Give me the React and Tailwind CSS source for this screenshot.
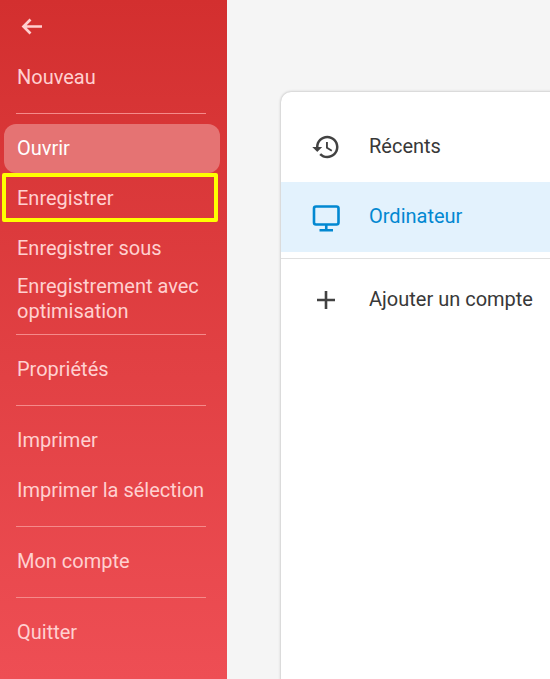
const font = { fontFamily: "Roboto, sans-serif" };

function Divider() {
  return <div className="ml-4 mr-[21px] mt-[11px] mb-[9px] h-px bg-[#f58a8a]" />;
}

function Item({ children, active, outlined, tall }) {
  return (
    <div
      className={`relative flex h-[50px] items-center pl-[17px] pr-2 text-[20px] leading-[25px] ${tall ? "pt-[2px]" : ""} ${
        active ? "text-white" : "text-[#ffd0d0]"
      }`}
    >
      {active && <div className="absolute left-1 right-[7px] top-px bottom-0 rounded-[12px] bg-[#e57373]" />}
      {outlined && (
        <div className="absolute left-[2px] right-[9px] top-0 bottom-px border-[4px] border-[#ffff00] rounded-[2px]" />
      )}
      <span className="relative">{children}</span>
    </div>
  );
}

function Row({ icon, label, selected, className, labelClass }) {
  return (
    <div
      className={`flex h-[70px] items-center pl-[29px] text-[20px] whitespace-nowrap ${
        selected ? "bg-[#e3f2fd] text-[#0288d1]" : "text-[#383838]"
      } ${className || ""}`}
    >
      {icon}
      <span className={`ml-[27px] ${labelClass || ""}`}>{label}</span>
    </div>
  );
}

const History = (
  <svg viewBox="0 0 24 24" fill="currentColor" className="h-[32px] w-[32px] shrink-0 translate-y-px p-px text-[#424242]">
    <path d="M13 3c-4.97 0-9 4.03-9 9H1l3.89 3.89.07.14L9 12H6c0-3.87 3.13-7 7-7s7 3.13 7 7-3.13 7-7 7c-1.93 0-3.68-.79-4.94-2.06l-1.42 1.42C8.27 19.99 10.51 21 13 21c4.97 0 9-4.03 9-9s-4.03-9-9-9zm-1 5v5l4.28 2.54.72-1.21-3.5-2.08V8H12z" />
  </svg>
);

const Monitor = (
  <svg viewBox="0 0 32 32" fill="none" stroke="currentColor" strokeWidth="2.6" className="h-[32px] w-[32px] shrink-0 text-[#0288d1]">
    <rect x="4" y="5.5" width="24.5" height="18" rx="2" />
    <path d="M16.25 23.5v5.5M9.5 29.2h13.5" />
  </svg>
);

const Plus = (
  <svg viewBox="0 0 32 32" fill="none" stroke="currentColor" strokeWidth="2.6" className="h-[32px] w-[32px] shrink-0 text-[#424242]">
    <path d="M16 7v18M7 16h18" />
  </svg>
);

export default function App() {
  return (
    <div className="flex h-[679px] w-[550px] overflow-hidden bg-[#f5f5f5]" style={font}>
      <aside className="w-[227px] shrink-0 bg-gradient-to-b from-[#d32f2f] to-[#ee4e54]">
        <div className="flex h-[52px] items-center pl-[17px] text-[#ffd0d0]">
          <svg viewBox="0 0 30 30" fill="none" stroke="currentColor" strokeWidth="2.7" className="h-[30px] w-[30px]">
            <path d="M25 15.5H7M13.5 8.5l-7 7 7 7" />
          </svg>
        </div>
        <Item>Nouveau</Item>
        <Divider />
        <Item active>Ouvrir</Item>
        <Item outlined>Enregistrer</Item>
        <Item>Enregistrer sous</Item>
        <Item tall>Enregistrement avec optimisation</Item>
        <Divider />
        <Item>Propriétés</Item>
        <Divider />
        <Item>Imprimer</Item>
        <Item>Imprimer la sélection</Item>
        <Divider />
        <Item>Mon compte</Item>
        <Divider />
        <Item>Quitter</Item>
      </aside>
      <main className="flex-1 pl-[54px] pt-[92px]">
        <div className="h-[600px] w-[400px] rounded-tl-[10px] bg-white pt-[19px] shadow-[0_0_3px_rgba(0,0,0,0.3)]">
          <Row label="Récents" icon={History} className="mb-px" />
          <Row selected label="Ordinateur" icon={Monitor} labelClass="pb-[2px]" />
          <div className="my-[6px] h-px bg-[#e0e0e0]" />
          <Row label="Ajouter un compte" icon={Plus} labelClass="pb-[2px]" />
        </div>
      </main>
    </div>
  );
}
